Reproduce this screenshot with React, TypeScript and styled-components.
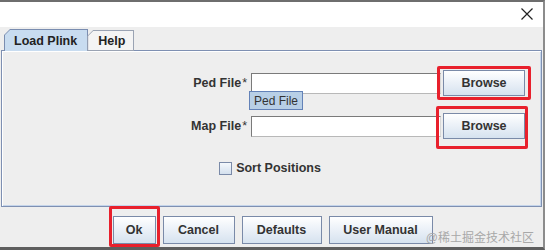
import styled, { createGlobalStyle } from "styled-components";

const GlobalStyle = createGlobalStyle`
  html, body {
    margin: 0;
    padding: 0;
    background: #ffffff;
  }
  * {
    box-sizing: border-box;
  }
`;

const App = () => {
  return (
    <>
      <GlobalStyle />
      <Window>
        <TitleBar>
          <CloseButton aria-label="close">
            <svg width="12" height="12" viewBox="0 0 12 12">
              <path d="M0.5 0.5 L11.5 11.5 M11.5 0.5 L0.5 11.5" stroke="#222" strokeWidth="1.2" fill="none" />
            </svg>
          </CloseButton>
        </TitleBar>
        <Body>
          <TabRow>
            <Tab $selected>
              <TabInner $selected>Load Plink</TabInner>
            </Tab>
            <Tab>
              <TabInner>Help</TabInner>
            </Tab>
          </TabRow>
          <Panel>
            <FormGrid>
              <FieldLabel>
                Ped File<Star>*</Star>
              </FieldLabel>
              <TextField />
              <BrowseButton>Browse</BrowseButton>
              <FieldLabel>
                Map File<Star>*</Star>
              </FieldLabel>
              <TextField />
              <BrowseButton>Browse</BrowseButton>
            </FormGrid>
            <CheckRow>
              <CheckBox />
              <CheckText>Sort Positions</CheckText>
            </CheckRow>
          </Panel>
          <ButtonBar>
            <DialogButton $width={43}>Ok</DialogButton>
            <DialogButton $width={72}>Cancel</DialogButton>
            <DialogButton $width={80}>Defaults</DialogButton>
            <DialogButton $width={104}>User Manual</DialogButton>
          </ButtonBar>
        </Body>
        <Tooltip>Ped File</Tooltip>
        <Highlight $left={437} $top={64} $width={94} $height={34} />
        <Highlight $left={436} $top={104} $width={92} $height={43} />
        <Highlight $left={109} $top={204} $width={51} $height={41} />
        <Watermark>@稀土掘金技术社区</Watermark>
      </Window>
    </>
  );
};

export default App;

const Window = styled.div`
  position: relative;
  width: 545px;
  height: 250px;
  display: flex;
  flex-direction: column;
  border-top: 2px solid #6e6e6e;
  border-right: 2px solid #8c8c8c;
  border-bottom: 3px solid #5e5e5e;
  background: #eeeeee;
  overflow: hidden;
  font-family: "Liberation Sans", Arial, sans-serif;
`;

const TitleBar = styled.div`
  height: 25px;
  flex: none;
  background: #ffffff;
  display: flex;
  align-items: center;
  justify-content: flex-end;
  padding-right: 10px;
`;

const CloseButton = styled.div`
  width: 12px;
  height: 12px;
  display: flex;
  margin-top: -1px;
`;

const Body = styled.div`
  flex: 1;
  display: flex;
  flex-direction: column;
  padding: 2px 0 0 1px;
`;

const TabRow = styled.div`
  display: flex;
  align-items: flex-end;
  height: 22px;
  padding-left: 3px;
  margin-bottom: -1px;
  position: relative;
  z-index: 1;
`;

const Tab = styled.div<{ $selected?: boolean }>`
  height: ${(p) => (p.$selected ? 22 : 21)}px;
  padding: 1px 1px ${(p) => (p.$selected ? 0 : 1)}px 1px;
  background: ${(p) => (p.$selected ? "#7a8db0" : "#9aa3b3")};
  clip-path: polygon(6px 0, 100% 0, 100% 100%, 0 100%, 0 6px);
  margin-right: -1px;
`;

const TabInner = styled.div<{ $selected?: boolean }>`
  height: 100%;
  display: flex;
  align-items: center;
  padding: 0 ${(p) => (p.$selected ? 10 : 8)}px 0 ${(p) => (p.$selected ? 9 : 10)}px;
  background: ${(p) => (p.$selected ? "#c8dcf0" : "#f4f4f4")};
  clip-path: polygon(5px 0, 100% 0, 100% 100%, 0 100%, 0 5px);
  font-size: 12.5px;
  font-weight: bold;
  color: #222;
`;

const Panel = styled.div`
  height: 157px;
  margin-right: 1px;
  border: 1px solid #7e90b2;
  box-shadow: inset 1px 1px 0 #ffffff, inset -1px -1px 0 #c4d4ea;
  display: flex;
  flex-direction: column;
  padding-top: 19px;
`;

const FormGrid = styled.div`
  display: grid;
  grid-template-columns: 247px 190px 82px;
  grid-auto-rows: 26px;
  column-gap: 2px;
  row-gap: 17px;
  align-items: center;
`;

const FieldLabel = styled.div`
  text-align: right;
  padding-right: 2px;
  font-size: 12.5px;
  font-weight: bold;
  color: #333;
`;

const Star = styled.span`
  font-weight: normal;
  margin-left: 1px;
`;

const TextField = styled.div`
  height: 21px;
  background: #ffffff;
  border-top: 1px solid #7a7a7a;
  border-left: 1px solid #7a7a7a;
  border-bottom: 1px solid #b8b8b8;
  border-right: 1px solid #d8d8d8;
`;

const buttonLook = `
  display: flex;
  align-items: center;
  justify-content: center;
  border: 1px solid #7a8aa8;
  background: linear-gradient(#ffffff 0%, #eef3f9 40%, #d6e2ef 100%);
  font-size: 12.5px;
  font-weight: bold;
  color: #333;
`;

const BrowseButton = styled.div`
  ${buttonLook}
  height: 26px;
`;

const CheckRow = styled.div`
  display: flex;
  align-items: center;
  justify-content: center;
  gap: 4px;
  margin-top: 22px;
  padding-right: 3px;
`;

const CheckBox = styled.div`
  width: 13px;
  height: 13px;
  border: 1px solid #7a8aa8;
  background: linear-gradient(#f4f8fc, #d4e0ee);
`;

const CheckText = styled.span`
  font-size: 12.5px;
  font-weight: bold;
  color: #333;
`;

const ButtonBar = styled.div`
  display: flex;
  justify-content: center;
  gap: 7px;
  margin-top: 9px;
  padding-left: 1px;
`;

const DialogButton = styled.div<{ $width: number }>`
  ${buttonLook}
  width: ${(p) => p.$width}px;
  height: 28px;
`;

const Tooltip = styled.div`
  position: absolute;
  left: 249px;
  top: 89px;
  height: 19px;
  padding: 0 4px;
  display: flex;
  align-items: center;
  background: #b8cfe6;
  border: 1px solid #6382b8;
  font-size: 12px;
  color: #333;
`;

const Highlight = styled.div<{ $left: number; $top: number; $width: number; $height: number }>`
  position: absolute;
  left: ${(p) => p.$left}px;
  top: ${(p) => p.$top}px;
  width: ${(p) => p.$width}px;
  height: ${(p) => p.$height}px;
  border: 3px solid #e8202c;
  border-radius: 2px;
`;

const Watermark = styled.div`
  position: absolute;
  right: 9px;
  top: 226px;
  font-size: 12px;
  color: #a8a8a8;
  font-family: "Liberation Sans", "Noto Sans CJK SC", sans-serif;
  white-space: nowrap;
`;
